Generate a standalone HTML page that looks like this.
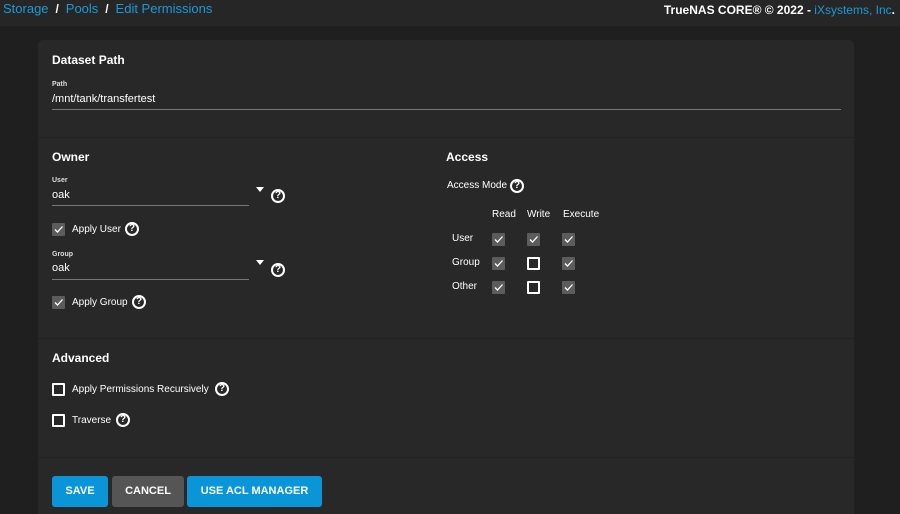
<!DOCTYPE html>
<html><head><meta charset="utf-8"><style>
*{margin:0;padding:0;box-sizing:border-box}
html,body{width:900px;height:514px;overflow:hidden}
body{background:#1f1f1f;font-family:"Liberation Sans",sans-serif;color:#fff;position:relative}
.a{position:absolute;white-space:nowrap}
.hdr{position:absolute;left:0;top:0;width:900px;height:26px;background:#262626}
.card{position:absolute;left:38px;top:40px;width:816px;height:474px;background:#282828;border-radius:5px 5px 0 0}
.div{position:absolute;left:38px;width:816px;height:1px;background:#222}
.h{font-weight:bold;font-size:12px}
.lbl{font-size:7px;font-weight:bold;color:#ddd}
.val{font-size:11px}
.line{position:absolute;height:1px;background:#777}
.t{font-size:10px}
.cb{position:absolute;width:13px;height:13px;background:#5c5c5c;border-radius:1px}
.cb svg{position:absolute;left:1px;top:1px}
.ub{position:absolute;width:13px;height:13px;border:2px solid #fff;border-radius:1px}
.q{position:absolute;width:14px;height:14px;border:2px solid #fff;border-radius:50%;font-size:10px;font-weight:bold;text-align:center;line-height:10px}
.tri{position:absolute;width:0;height:0;border-left:4px solid transparent;border-right:4px solid transparent;border-top:5px solid #fff}
.btn{position:absolute;top:476px;height:31px;border-radius:3px;font-size:11px;font-weight:bold;text-align:center;line-height:31px}
</style></head><body>
<div class="hdr"></div>
<div class="a" style="left:3px;top:1px;font-size:13px;color:#1c9ad6">Storage <span style="color:#fff;font-weight:bold;font-size:12px">&nbsp;/&nbsp;</span> Pools <span style="color:#fff;font-weight:bold;font-size:12px">&nbsp;/&nbsp;</span> Edit Permissions</div>
<div class="a" style="right:5px;top:3px;font-size:12px;font-weight:bold">TrueNAS CORE® © 2022 - <span style="color:#1c9ad6;font-weight:normal">iXsystems, Inc</span>.</div>
<div class="card"></div>
<div class="div" style="top:137px"></div>
<div class="div" style="top:338px"></div>
<div class="div" style="top:457px"></div>

<div class="a h" style="left:52px;top:53px">Dataset Path</div>
<div class="a lbl" style="left:52px;top:81px">Path</div>
<div class="a val" style="left:52px;top:93px">/mnt/tank/transfertest</div>
<div class="line" style="left:52px;top:109px;width:789px"></div>

<div class="a h" style="left:52px;top:150px">Owner</div>
<div class="a lbl" style="left:52px;top:177px">User</div>
<div class="a val" style="left:52px;top:189px">oak</div>
<div class="line" style="left:52px;top:205px;width:197px"></div>
<div class="tri" style="left:256px;top:187px"></div>
<div class="q" style="left:271px;top:189px">?</div>
<div class="cb" style="left:52px;top:223px"><svg width="11" height="11" viewBox="0 0 11 11"><path d="M2 5.5l2.5 2.5 5-5.5" stroke="#fff" stroke-width="1.3" fill="none"/></svg></div>
<div class="a t" style="left:72px;top:224px">Apply User</div>
<div class="q" style="left:125px;top:222px">?</div>
<div class="a lbl" style="left:52px;top:251px">Group</div>
<div class="a val" style="left:52px;top:262px">oak</div>
<div class="line" style="left:52px;top:279px;width:197px"></div>
<div class="tri" style="left:256px;top:260px"></div>
<div class="q" style="left:271px;top:263px">?</div>
<div class="cb" style="left:52px;top:296px"><svg width="11" height="11" viewBox="0 0 11 11"><path d="M2 5.5l2.5 2.5 5-5.5" stroke="#fff" stroke-width="1.3" fill="none"/></svg></div>
<div class="a t" style="left:72px;top:297px">Apply Group</div>
<div class="q" style="left:132px;top:295px">?</div>

<div class="a h" style="left:446px;top:150px">Access</div>
<div class="a t" style="left:447px;top:180px">Access Mode</div>
<div class="q" style="left:510px;top:179px">?</div>
<div class="a t" style="left:492px;top:209px">Read</div>
<div class="a t" style="left:527px;top:209px">Write</div>
<div class="a t" style="left:563px;top:209px">Execute</div>
<div class="a t" style="left:452px;top:233px">User</div>
<div class="a t" style="left:452px;top:257px">Group</div>
<div class="a t" style="left:452px;top:281px">Other</div>
<div class="cb" style="left:492px;top:233px"><svg width="11" height="11" viewBox="0 0 11 11"><path d="M2 5.5l2.5 2.5 5-5.5" stroke="#fff" stroke-width="1.3" fill="none"/></svg></div>
<div class="cb" style="left:527px;top:233px"><svg width="11" height="11" viewBox="0 0 11 11"><path d="M2 5.5l2.5 2.5 5-5.5" stroke="#fff" stroke-width="1.3" fill="none"/></svg></div>
<div class="cb" style="left:562px;top:233px"><svg width="11" height="11" viewBox="0 0 11 11"><path d="M2 5.5l2.5 2.5 5-5.5" stroke="#fff" stroke-width="1.3" fill="none"/></svg></div>
<div class="cb" style="left:492px;top:257px"><svg width="11" height="11" viewBox="0 0 11 11"><path d="M2 5.5l2.5 2.5 5-5.5" stroke="#fff" stroke-width="1.3" fill="none"/></svg></div>
<div class="ub" style="left:527px;top:257px"></div>
<div class="cb" style="left:562px;top:257px"><svg width="11" height="11" viewBox="0 0 11 11"><path d="M2 5.5l2.5 2.5 5-5.5" stroke="#fff" stroke-width="1.3" fill="none"/></svg></div>
<div class="cb" style="left:492px;top:281px"><svg width="11" height="11" viewBox="0 0 11 11"><path d="M2 5.5l2.5 2.5 5-5.5" stroke="#fff" stroke-width="1.3" fill="none"/></svg></div>
<div class="ub" style="left:527px;top:281px"></div>
<div class="cb" style="left:562px;top:281px"><svg width="11" height="11" viewBox="0 0 11 11"><path d="M2 5.5l2.5 2.5 5-5.5" stroke="#fff" stroke-width="1.3" fill="none"/></svg></div>

<div class="a h" style="left:52px;top:351px">Advanced</div>
<div class="ub" style="left:52px;top:383px"></div>
<div class="a t" style="left:72px;top:384px">Apply Permissions Recursively</div>
<div class="q" style="left:215px;top:382px">?</div>
<div class="ub" style="left:52px;top:414px"></div>
<div class="a t" style="left:72px;top:415px">Traverse</div>
<div class="q" style="left:116px;top:413px">?</div>

<div class="btn" style="left:52px;width:56px;background:#0a95d8">SAVE</div>
<div class="btn" style="left:112px;width:72px;background:#555">CANCEL</div>
<div class="btn" style="left:187px;width:135px;background:#0a95d8">USE ACL MANAGER</div>
</body></html>
